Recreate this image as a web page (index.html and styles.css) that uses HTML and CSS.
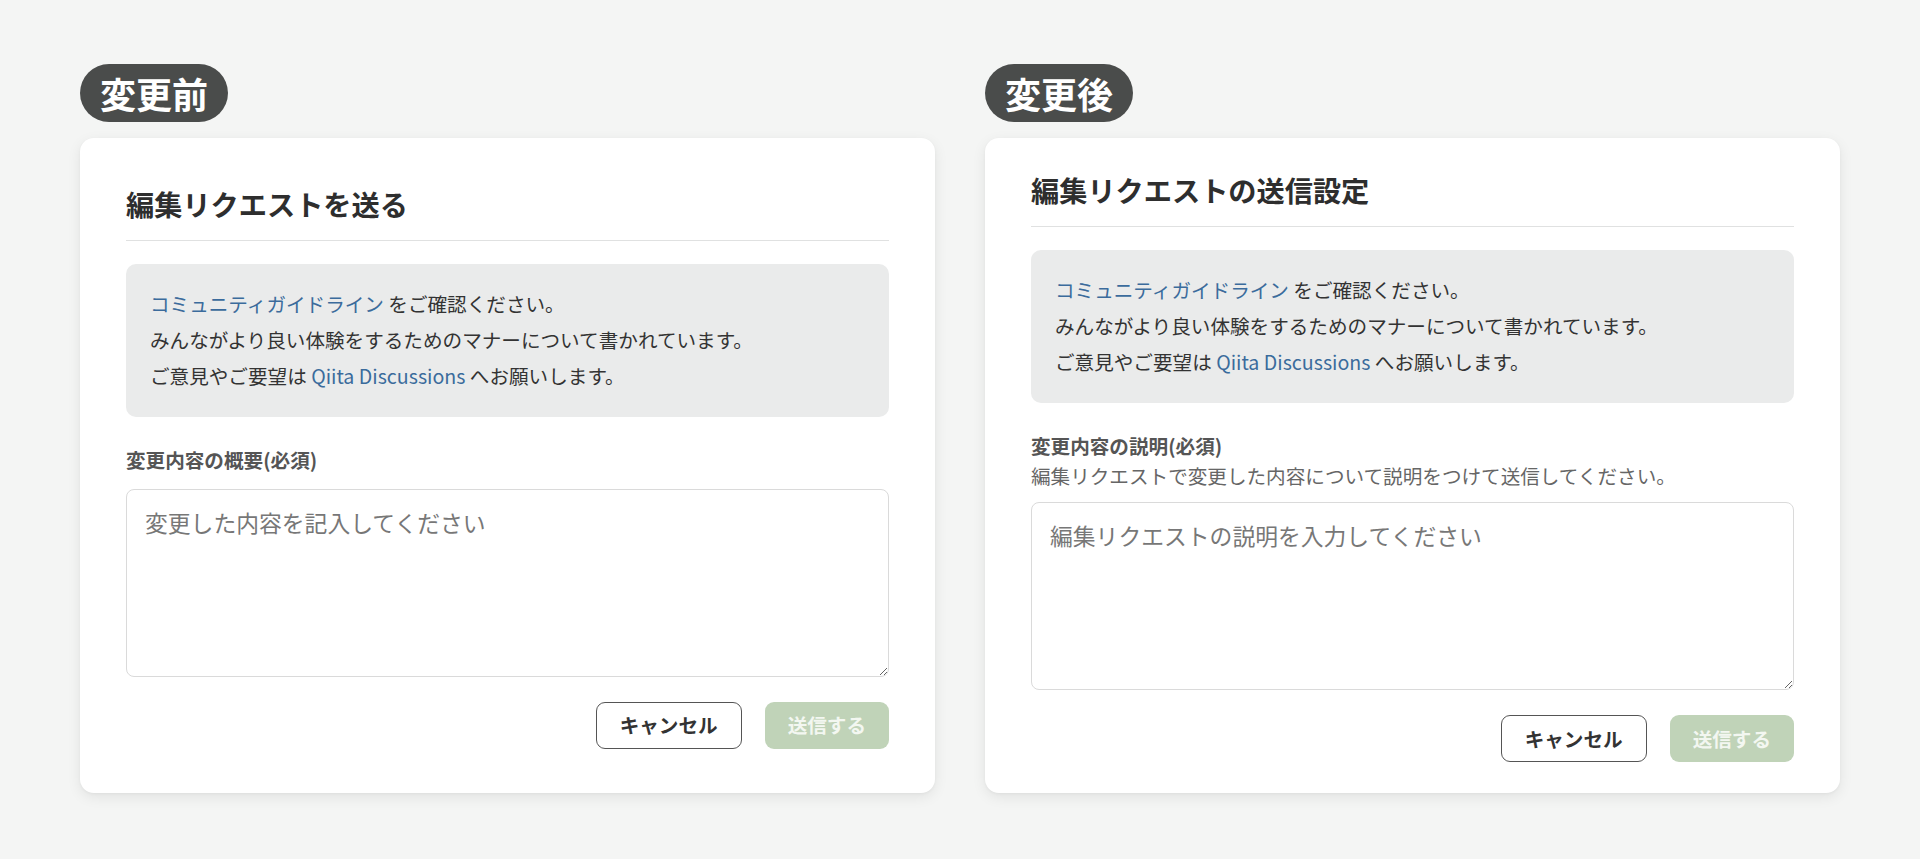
FILE: index.html
```html
<!DOCTYPE html>
<html lang="ja">
<head>
<meta charset="utf-8">
<title>編集リクエスト 変更前・変更後</title>
<link rel="stylesheet" href="styles.css">
</head>
<body>
<main class="compare">
  <section class="panel">
    <div class="badge">変更前</div>
    <div class="card">
      <h2 class="card-title">編集リクエストを送る</h2>
      <div class="notice">
        <p><a class="link" href="#">コミュニティガイドライン</a> をご確認ください。</p>
        <p>みんながより良い体験をするためのマナーについて書かれています。</p>
        <p>ご意見やご要望は <a class="link" href="#">Qiita Discussions</a> へお願いします。</p>
      </div>
      <div class="field-label">変更内容の概要(必須)</div>
      <textarea class="input input-before" placeholder="変更した内容を記入してください"></textarea>
      <div class="actions">
        <button class="btn btn-cancel" type="button">キャンセル</button>
        <button class="btn btn-submit" type="button">送信する</button>
      </div>
    </div>
  </section>
  <section class="panel">
    <div class="badge">変更後</div>
    <div class="card">
      <h2 class="card-title">編集リクエストの送信設定</h2>
      <div class="notice">
        <p><a class="link" href="#">コミュニティガイドライン</a> をご確認ください。</p>
        <p>みんながより良い体験をするためのマナーについて書かれています。</p>
        <p>ご意見やご要望は <a class="link" href="#">Qiita Discussions</a> へお願いします。</p>
      </div>
      <div class="field-label">変更内容の説明(必須)</div>
      <div class="field-desc">編集リクエストで変更した内容について説明をつけて送信してください。</div>
      <textarea class="input input-after" placeholder="編集リクエストの説明を入力してください"></textarea>
      <div class="actions">
        <button class="btn btn-cancel" type="button">キャンセル</button>
        <button class="btn btn-submit" type="button">送信する</button>
      </div>
    </div>
  </section>
</main>
</body>
</html>
```
FILE: styles.css
```css
* {
  box-sizing: border-box;
}

html, body {
  margin: 0;
  padding: 0;
}

body {
  background: #f4f5f4;
  font-family: "Noto Sans CJK JP", "Noto Sans", "Liberation Sans", sans-serif;
  color: #333333;
  height: 859px;
  overflow: hidden;
}

.compare {
  display: grid;
  grid-template-columns: 855px 855px;
  column-gap: 50px;
  padding: 64px 80px 0;
}

.panel {
  display: flex;
  flex-direction: column;
  gap: 16px;
}

.badge {
  align-self: flex-start;
  height: 58px;
  line-height: 58px;
  padding: 0 20px;
  border-radius: 29px;
  background: #4a4c4b;
  color: #ffffff;
  font-size: 36px;
  font-weight: 700;
  letter-spacing: 0;
}

.card {
  flex: 1;
  display: flex;
  flex-direction: column;
  justify-content: center;
  background: #ffffff;
  border-radius: 14px;
  padding: 31px 46px;
  box-shadow: 0 4px 14px rgba(0, 0, 0, 0.08), 0 1px 3px rgba(0, 0, 0, 0.04);
  height: 655px;
}

.card-title {
  margin: 0;
  font-size: 28.2px;
  line-height: 42px;
  font-weight: 700;
  color: #2e2e2e;
  padding-bottom: 15px;
  border-bottom: 1px solid #e0e1e1;
}

.notice {
  margin-top: 23px;
  background: #eaebeb;
  border-radius: 10px;
  padding: 22px 24px 23px;
  font-size: 19.6px;
  line-height: 36px;
  color: #333333;
}

.notice p {
  margin: 0;
}

.link {
  color: #3b6b9c;
  text-decoration: none;
}

.field-label {
  margin-top: 28px;
  font-size: 19.6px;
  line-height: 30px;
  font-weight: 700;
  color: #555555;
}

.field-desc {
  font-size: 19.6px;
  line-height: 30px;
  color: #666666;
}

.input {
  display: block;
  width: 100%;
  height: 188px;
  border: 1px solid #dadada;
  border-radius: 8px;
  padding: 16px 18px;
  font-family: "Noto Sans CJK JP", "Noto Sans", "Liberation Sans", sans-serif;
  font-size: 22.8px;
  line-height: 34px;
  color: #333333;
  background: #ffffff;
  resize: vertical;
  outline: none;
}

.input::placeholder {
  color: #777777;
}

.input-before {
  margin-top: 14px;
}

.input-after {
  margin-top: 11px;
}

.actions {
  display: flex;
  justify-content: flex-end;
  gap: 23px;
  margin-top: 25px;
}

.btn {
  height: 47px;
  padding: 0 23px;
  border-radius: 9px;
  font-family: "Noto Sans CJK JP", "Noto Sans", "Liberation Sans", sans-serif;
  font-size: 19.6px;
  font-weight: 700;
  line-height: 1;
  cursor: pointer;
}

.btn-cancel {
  background: #ffffff;
  border: 1px solid #555555;
  color: #333333;
}

.btn-submit {
  background: #c0d3b8;
  border: none;
  color: #f3f7f1;
}
```
